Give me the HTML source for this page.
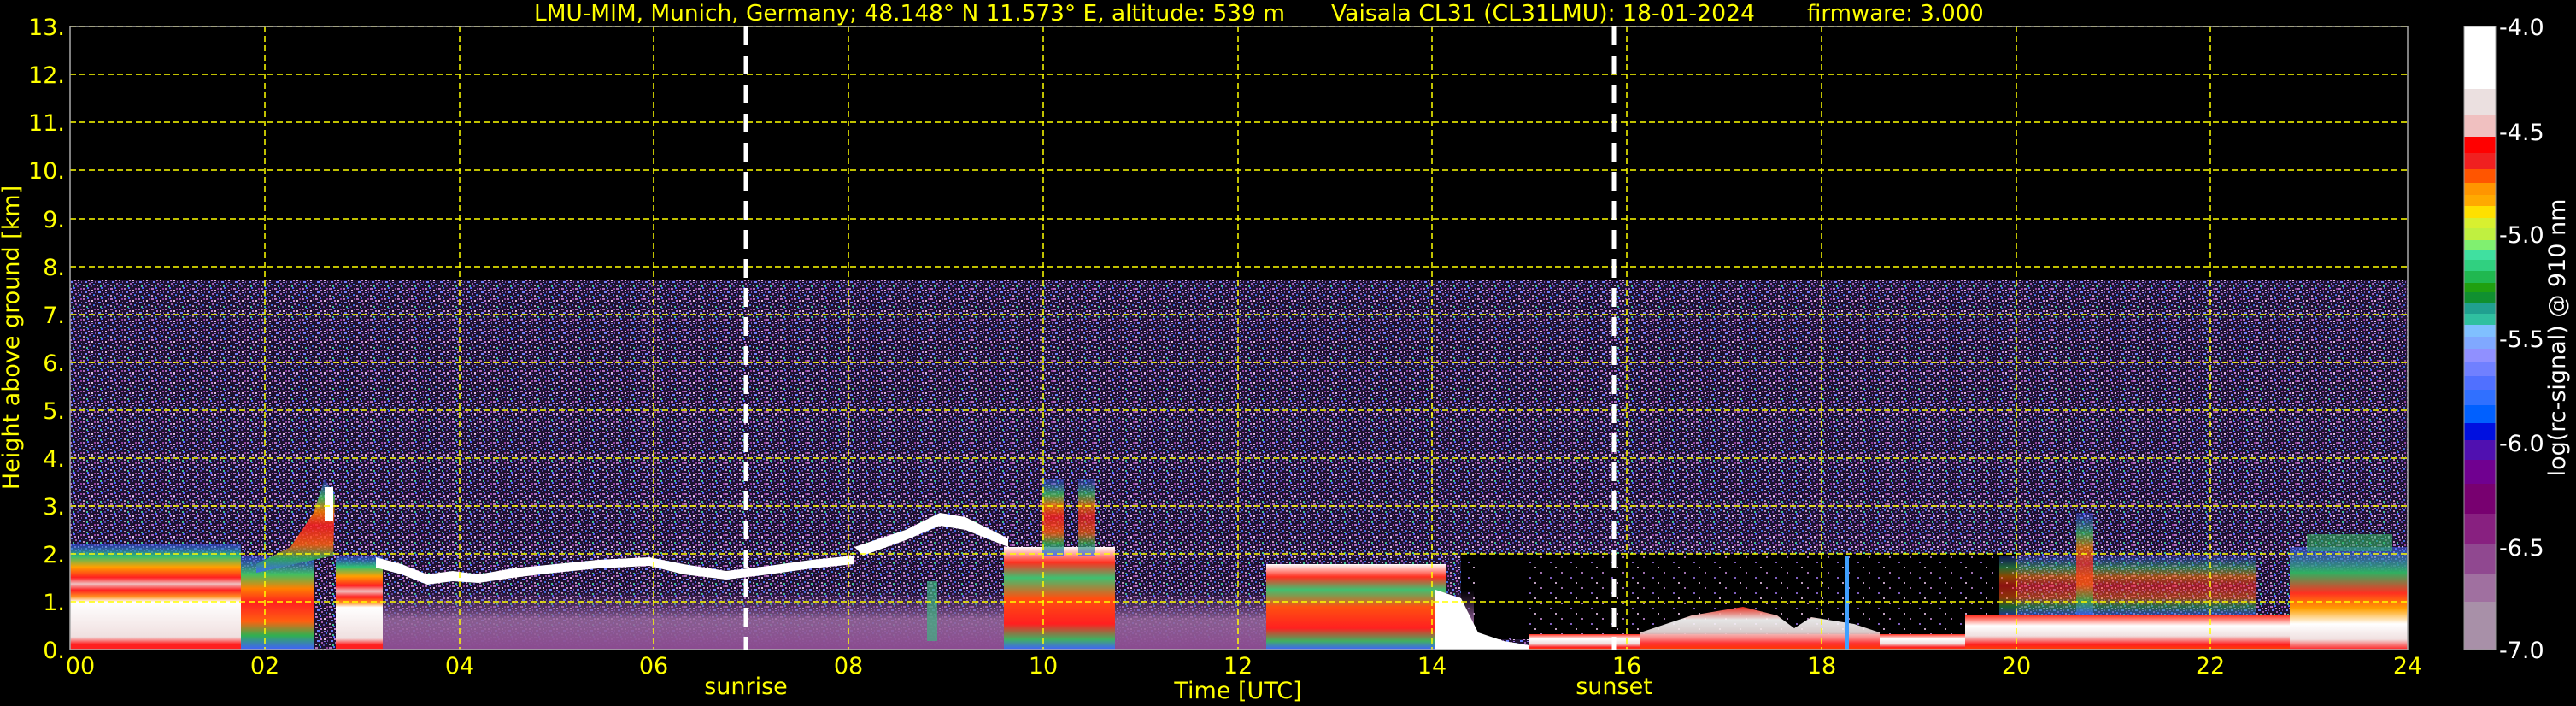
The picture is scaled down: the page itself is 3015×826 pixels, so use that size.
<!DOCTYPE html>
<html><head><meta charset="utf-8"><style>
html,body{margin:0;padding:0;background:#000;width:3015px;height:826px;overflow:hidden}
svg{display:block}
text{font-family:"DejaVu Sans","Liberation Sans",sans-serif}
</style></head><body>
<svg width="3015" height="826" viewBox="0 0 3015 826" xmlns="http://www.w3.org/2000/svg">
<defs>
<pattern id="nz" width="16" height="12" patternUnits="userSpaceOnUse">
<rect width="16" height="12" fill="#1e1230"/>
<rect x="1" y="1" width="3" height="2" fill="#b070c0"/>
<rect x="6" y="0" width="2" height="2" fill="#5060ff"/>
<rect x="11" y="3" width="2" height="2" fill="#e0c0e0"/>
<rect x="14" y="1" width="2" height="2" fill="#9040a0"/>
<rect x="3" y="5" width="3" height="2" fill="#7080ff"/>
<rect x="8" y="7" width="2" height="2" fill="#a060b0"/>
<rect x="13" y="8" width="2" height="2" fill="#4070e0"/>
<rect x="1" y="9" width="2" height="2" fill="#c090c0"/>
<rect x="5" y="10" width="2" height="2" fill="#40c090"/>
<rect x="15" y="5" width="1" height="2" fill="#8050b0"/>
<rect x="10" y="10" width="2" height="2" fill="#6040a0"/>
<rect x="7" y="3" width="2" height="2" fill="#c080d0"/>
<rect x="11" y="6" width="2" height="1" fill="#9070e0"/>
</pattern>
<pattern id="nz2" width="24" height="18" patternUnits="userSpaceOnUse">
<rect width="24" height="18" fill="#000"/>
<rect x="3" y="3" width="2" height="2" fill="#a070b0"/>
<rect x="14" y="9" width="2" height="2" fill="#8060c0"/>
<rect x="20" y="15" width="2" height="2" fill="#c0a0c0"/>
</pattern>
<linearGradient id="gnd" x1="0" y1="1" x2="0" y2="0">
<stop offset="0" stop-color="#8a4a90"/><stop offset="0.5" stop-color="#9a6aa0" stop-opacity="0.85"/><stop offset="1" stop-color="#6a3a80" stop-opacity="0"/>
</linearGradient>
<linearGradient id="c1" x1="0" y1="0" x2="0" y2="1">
<stop offset="0" stop-color="#3050ff" stop-opacity="0.5"/><stop offset="0.12" stop-color="#30c070"/><stop offset="0.22" stop-color="#ffa000"/><stop offset="0.32" stop-color="#ff2020"/><stop offset="0.38" stop-color="#f0c0c0"/><stop offset="0.44" stop-color="#ff2020"/><stop offset="0.5" stop-color="#ff9020"/><stop offset="0.55" stop-color="#ffffff"/><stop offset="0.88" stop-color="#f0e0e0"/><stop offset="0.95" stop-color="#ff2020"/><stop offset="1" stop-color="#ff2020"/>
</linearGradient>
<linearGradient id="c2" x1="0" y1="0" x2="0" y2="1">
<stop offset="0" stop-color="#3050ff" stop-opacity="0.5"/><stop offset="0.2" stop-color="#40c060"/><stop offset="0.35" stop-color="#ff8000"/><stop offset="0.5" stop-color="#ff2020"/><stop offset="0.7" stop-color="#ff6010"/><stop offset="0.85" stop-color="#30b050"/><stop offset="1" stop-color="#4060ff"/>
</linearGradient>
<linearGradient id="c3" x1="0" y1="0" x2="0" y2="1">
<stop offset="0" stop-color="#ffffff"/><stop offset="0.15" stop-color="#ff3020"/><stop offset="0.3" stop-color="#40c070"/><stop offset="0.5" stop-color="#ff5010"/><stop offset="0.75" stop-color="#ff2020"/><stop offset="0.9" stop-color="#40b060"/><stop offset="1" stop-color="#4060ff"/>
</linearGradient>
<linearGradient id="c4" x1="0" y1="0" x2="0" y2="1">
<stop offset="0" stop-color="#ff3020"/><stop offset="0.3" stop-color="#ffffff"/><stop offset="0.6" stop-color="#f0e0e0"/><stop offset="0.85" stop-color="#ff2020"/><stop offset="1" stop-color="#ff4000"/>
</linearGradient>
<linearGradient id="c5" x1="0" y1="0" x2="0" y2="1">
<stop offset="0" stop-color="#4060ff" stop-opacity="0.5"/><stop offset="0.25" stop-color="#30b060"/><stop offset="0.45" stop-color="#ff3020"/><stop offset="0.6" stop-color="#ffa000"/><stop offset="0.75" stop-color="#ffffff"/><stop offset="0.9" stop-color="#f0e0e0"/><stop offset="1" stop-color="#ff2020"/>
</linearGradient>
</defs>

<rect x="82" y="328" width="2736" height="432" fill="url(#nz)"/>
<rect x="1710" y="648" width="650" height="100" fill="url(#nz2)"/>
<rect x="1730" y="648" width="60" height="95" fill="#000"/>
<rect x="395" y="690" width="1330" height="70" fill="url(#gnd)"/>

<rect x="82" y="636" width="200" height="124" fill="url(#c1)"/>
<rect x="282" y="650" width="85" height="110" fill="url(#c2)"/>
<path d="M300 660 L340 640 L367 600 L380 560 L392 580 L390 650 L300 670Z" fill="url(#c2)" opacity="0.85"/>
<rect x="380" y="570" width="10" height="40" fill="#fff"/>
<rect x="393" y="650" width="55" height="110" fill="url(#c1)"/>
<path d="M440 652 L470 660 L500 672 L530 668 L560 672 L600 665 L650 660 L700 655 L760 652 L800 660 L850 668 L900 662 L950 655 L1000 650 L1000 660 L950 665 L900 672 L850 678 L800 672 L760 662 L700 665 L650 670 L600 676 L560 682 L530 680 L500 684 L470 672 L440 664Z" fill="#fff"/>
<path d="M1000 640 L1060 620 L1100 600 L1130 605 L1180 630 L1180 640 L1130 620 L1100 615 L1060 632 L1010 650Z" fill="#fff"/>
<rect x="1175" y="640" width="130" height="120" fill="url(#c3)"/>
<rect x="1220" y="560" width="25" height="90" fill="url(#c2)" opacity="0.8"/>
<rect x="1262" y="560" width="20" height="90" fill="url(#c2)" opacity="0.7"/>
<rect x="1085" y="680" width="12" height="70" fill="#40b080" opacity="0.7"/>
<rect x="1482" y="660" width="210" height="100" fill="url(#c3)"/>
<path d="M1680 690 L1710 700 L1730 740 L1760 750 L1790 755 L1790 760 L1680 760Z" fill="#fff"/>
<rect x="1790" y="742" width="520" height="18" fill="url(#c4)"/>
<path d="M1920 740 L1980 720 L2040 710 L2080 720 L2100 735 L2120 722 L2170 730 L2200 740 L2200 760 L1920 760Z" fill="url(#c4)" opacity="0.9"/>
<rect x="2160" y="650" width="4" height="110" fill="#40a0ff"/>
<rect x="2300" y="720" width="518" height="40" fill="url(#c4)"/>
<rect x="2340" y="650" width="300" height="70" fill="url(#c2)" opacity="0.55"/>
<rect x="2430" y="600" width="20" height="120" fill="url(#c2)" opacity="0.7"/>
<rect x="2680" y="640" width="138" height="120" fill="url(#c5)"/>
<rect x="2700" y="625" width="100" height="20" fill="#30b060" opacity="0.6"/>

<g stroke="#ffff00" stroke-width="1.5" stroke-dasharray="7,4" fill="none">
<line x1="82" y1="704" x2="2818" y2="704"/><line x1="82" y1="648" x2="2818" y2="648"/>
<line x1="82" y1="592" x2="2818" y2="592"/><line x1="82" y1="536" x2="2818" y2="536"/>
<line x1="82" y1="480" x2="2818" y2="480"/><line x1="82" y1="424" x2="2818" y2="424"/>
<line x1="82" y1="368" x2="2818" y2="368"/><line x1="82" y1="312" x2="2818" y2="312"/>
<line x1="82" y1="256" x2="2818" y2="256"/><line x1="82" y1="199" x2="2818" y2="199"/>
<line x1="82" y1="143" x2="2818" y2="143"/><line x1="82" y1="87" x2="2818" y2="87"/>
<line x1="82" y1="31" x2="2818" y2="31"/>
<line x1="310" y1="31" x2="310" y2="760"/><line x1="538" y1="31" x2="538" y2="760"/>
<line x1="765" y1="31" x2="765" y2="760"/><line x1="993" y1="31" x2="993" y2="760"/>
<line x1="1221" y1="31" x2="1221" y2="760"/><line x1="1449" y1="31" x2="1449" y2="760"/>
<line x1="1676" y1="31" x2="1676" y2="760"/><line x1="1904" y1="31" x2="1904" y2="760"/>
<line x1="2132" y1="31" x2="2132" y2="760"/><line x1="2360" y1="31" x2="2360" y2="760"/>
<line x1="2587" y1="31" x2="2587" y2="760"/>
</g>
<rect x="82" y="31" width="2736" height="729" fill="none" stroke="#aaa" stroke-width="1.5"/>
<g stroke="#fff" stroke-width="5" stroke-dasharray="22,12">
<line x1="873" y1="31" x2="873" y2="760"/><line x1="1889" y1="31" x2="1889" y2="760"/>
</g>

<g fill="#ffff00" font-size="26">
<text x="625" y="24" textLength="879" lengthAdjust="spacingAndGlyphs">LMU-MIM, Munich, Germany; 48.148° N 11.573° E, altitude: 539 m</text>
<text x="1558" y="24" textLength="496" lengthAdjust="spacingAndGlyphs">Vaisala CL31 (CL31LMU): 18-01-2024</text>
<text x="2115" y="24">firmware: 3.000</text>
</g>

<g fill="#ffff00" font-size="27" text-anchor="end">
<text x="76" y="41">13.</text><text x="76" y="97">12.</text><text x="76" y="153">11.</text>
<text x="76" y="209">10.</text><text x="76" y="266">9.</text><text x="76" y="322">8.</text>
<text x="76" y="378">7.</text><text x="76" y="434">6.</text><text x="76" y="490">5.</text>
<text x="76" y="546">4.</text><text x="76" y="602">3.</text><text x="76" y="658">2.</text>
<text x="76" y="714">1.</text><text x="76" y="770">0.</text>
</g>
<text transform="translate(22,395) rotate(-90)" fill="#ffff00" font-size="27" text-anchor="middle">Height above ground [km]</text>

<g fill="#ffff00" font-size="27" text-anchor="middle">
<text x="94" y="788">00</text><text x="310" y="788">02</text><text x="538" y="788">04</text>
<text x="765" y="788">06</text><text x="993" y="788">08</text><text x="1221" y="788">10</text>
<text x="1449" y="788">12</text><text x="1676" y="788">14</text><text x="1904" y="788">16</text>
<text x="2132" y="788">18</text><text x="2360" y="788">20</text><text x="2587" y="788">22</text>
<text x="2818" y="788">24</text>
<text x="873" y="812">sunrise</text><text x="1889" y="812">sunset</text>
<text x="1449" y="817">Time [UTC]</text>
</g>

<g>
<rect x="2884" y="31" width="37" height="73" fill="#ffffff"/>
<rect x="2884" y="104" width="37" height="30" fill="#ebe0e0"/>
<rect x="2884" y="134" width="37" height="26" fill="#f0c0c0"/>
<rect x="2884" y="160" width="37" height="19" fill="#ff0000"/>
<rect x="2884" y="179" width="37" height="19" fill="#f02020"/>
<rect x="2884" y="198" width="37" height="16" fill="#ff5500"/>
<rect x="2884" y="214" width="37" height="14" fill="#ff9500"/>
<rect x="2884" y="228" width="37" height="13" fill="#ffaa00"/>
<rect x="2884" y="241" width="37" height="14" fill="#ffe000"/>
<rect x="2884" y="255" width="37" height="12" fill="#d8f030"/>
<rect x="2884" y="267" width="37" height="14" fill="#c0f040"/>
<rect x="2884" y="281" width="37" height="12" fill="#80f070"/>
<rect x="2884" y="293" width="37" height="11" fill="#40e0a0"/>
<rect x="2884" y="304" width="37" height="13" fill="#30d080"/>
<rect x="2884" y="317" width="37" height="14" fill="#20b850"/>
<rect x="2884" y="331" width="37" height="11" fill="#20a010"/>
<rect x="2884" y="342" width="37" height="12" fill="#109030"/>
<rect x="2884" y="354" width="37" height="13" fill="#20a090"/>
<rect x="2884" y="367" width="37" height="13" fill="#30c0a0"/>
<rect x="2884" y="380" width="37" height="14" fill="#80c0ff"/>
<rect x="2884" y="394" width="37" height="14" fill="#80a8ff"/>
<rect x="2884" y="408" width="37" height="16" fill="#9090ff"/>
<rect x="2884" y="424" width="37" height="16" fill="#7080ff"/>
<rect x="2884" y="440" width="37" height="16" fill="#5070ff"/>
<rect x="2884" y="456" width="37" height="18" fill="#3070ff"/>
<rect x="2884" y="474" width="37" height="21" fill="#0060ff"/>
<rect x="2884" y="495" width="37" height="20" fill="#0010e0"/>
<rect x="2884" y="515" width="37" height="23" fill="#5010b0"/>
<rect x="2884" y="538" width="37" height="28" fill="#700090"/>
<rect x="2884" y="566" width="37" height="35" fill="#780070"/>
<rect x="2884" y="601" width="37" height="36" fill="#882080"/>
<rect x="2884" y="637" width="37" height="35" fill="#904890"/>
<rect x="2884" y="672" width="37" height="32" fill="#a070a0"/>
<rect x="2884" y="704" width="37" height="56" fill="#a890a8"/>
<rect x="2884" y="31" width="37" height="729" fill="none" stroke="#999" stroke-width="1"/>
</g>
<g fill="#fff" font-size="27">
<text x="2925" y="41">-4.0</text><text x="2925" y="164">-4.5</text>
<text x="2925" y="284">-5.0</text><text x="2925" y="406">-5.5</text>
<text x="2925" y="528">-6.0</text><text x="2925" y="650">-6.5</text>
<text x="2925" y="770">-7.0</text>
</g>
<text transform="translate(3002,395) rotate(-90)" fill="#fff" font-size="27" text-anchor="middle">log(rc-signal) @ 910 nm</text>
</svg>
</body></html>
